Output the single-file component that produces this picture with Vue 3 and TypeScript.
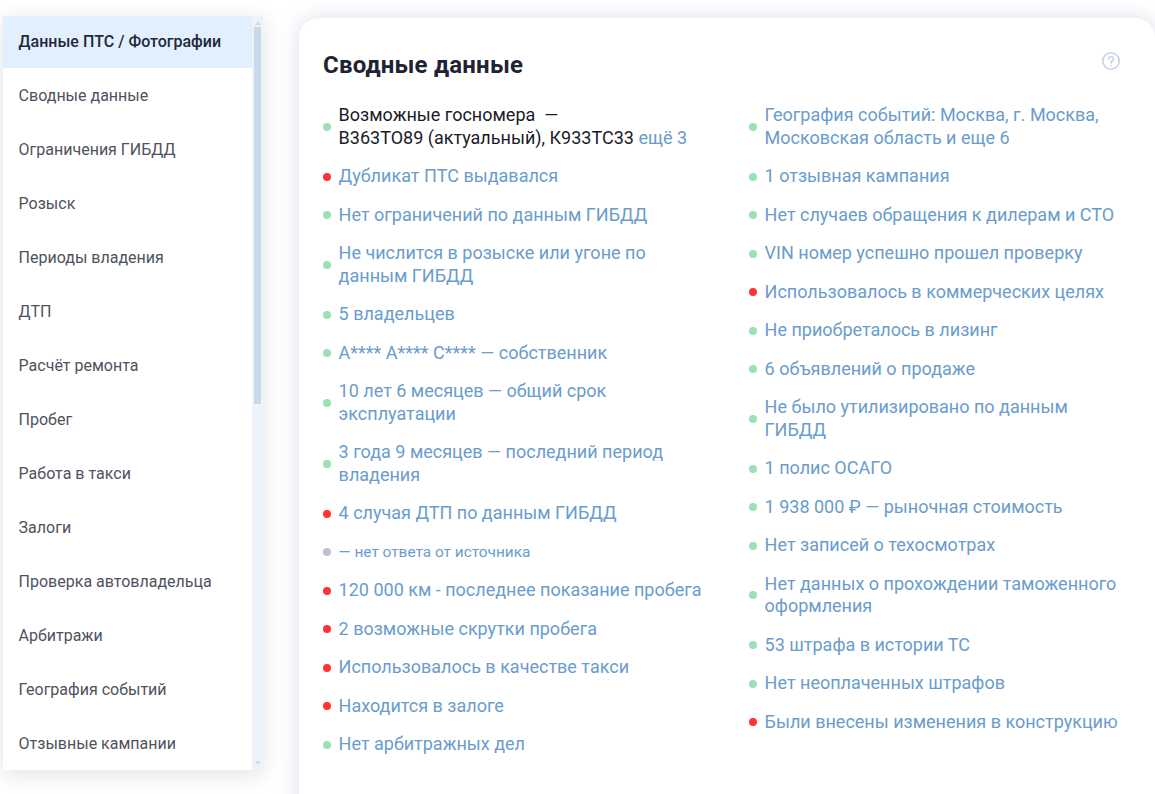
<script setup lang="ts">
type Dot = 'g' | 'r' | 'n'
interface Row { t: string; d: Dot; small?: boolean }
const menu: string[] = ['Данные ПТС / Фотографии','Сводные данные','Ограничения ГИБДД','Розыск','Периоды владения','ДТП','Расчёт ремонта','Пробег','Работа в такси','Залоги','Проверка автовладельца','Арбитражи','География событий','Отзывные кампании']
const left: Row[] = [
  { t: 'Дубликат ПТС выдавался', d: 'r' },
  { t: 'Нет ограничений по данным ГИБДД', d: 'g' },
  { t: 'Не числится в розыске или угоне по данным ГИБДД', d: 'g' },
  { t: '5 владельцев', d: 'g' },
  { t: 'А**** А**** С**** — собственник', d: 'g' },
  { t: '10 лет 6 месяцев — общий срок эксплуатации', d: 'g' },
  { t: '3 года 9 месяцев — последний период владения', d: 'g' },
  { t: '4 случая ДТП по данным ГИБДД', d: 'r' },
  { t: '— нет ответа от источника', d: 'n', small: true },
  { t: '120 000 км - последнее показание пробега', d: 'r' },
  { t: '2 возможные скрутки пробега', d: 'r' },
  { t: 'Использовалось в качестве такси', d: 'r' },
  { t: 'Находится в залоге', d: 'r' },
  { t: 'Нет арбитражных дел', d: 'g' },
]
const right: Row[] = [
  { t: 'География событий: Москва, г. Москва, Московская область и еще 6', d: 'g' },
  { t: '1 отзывная кампания', d: 'g' },
  { t: 'Нет случаев обращения к дилерам и СТО', d: 'g' },
  { t: 'VIN номер успешно прошел проверку', d: 'g' },
  { t: 'Использовалось в коммерческих целях', d: 'r' },
  { t: 'Не приобреталось в лизинг', d: 'g' },
  { t: '6 объявлений о продаже', d: 'g' },
  { t: 'Не было утилизировано по данным ГИБДД', d: 'g' },
  { t: '1 полис ОСАГО', d: 'g' },
  { t: '1 938 000 ₽ — рыночная стоимость', d: 'g' },
  { t: 'Нет записей о техосмотрах', d: 'g' },
  { t: 'Нет данных о прохождении таможенного оформления', d: 'g' },
  { t: '53 штрафа в истории ТС', d: 'g' },
  { t: 'Нет неоплаченных штрафов', d: 'g' },
  { t: 'Были внесены изменения в конструкцию', d: 'r' },
]
</script>

<template>
  <div class="page">
    <aside class="side">
      <ul class="menu">
        <li v-for="(m, i) in menu" :key="m" class="mi" :class="{ on: i === 0 }">{{ m }}</li>
      </ul>
      <div class="bar">
        <span class="up"></span>
        <div class="track"><div class="thumb"></div></div>
        <span class="down"></span>
      </div>
    </aside>
    <main class="card">
      <header class="head">
        <h2 class="title">Сводные данные</h2>
        <svg class="help" width="20" height="20" viewBox="0 0 20 20" fill="none" stroke="#c3d2e6" stroke-width="1.6">
          <circle cx="10" cy="10" r="8.2" />
          <path d="M7.6 8a2.4 2.4 0 1 1 3.7 2c-.9.6-1.3 1-1.3 2" stroke-linecap="round" />
          <circle cx="10" cy="14.4" r=".5" fill="#c3d2e6" stroke-width=".8" />
        </svg>
      </header>
      <div class="cols">
        <ul class="col">
          <li class="row">
            <i class="dot g"></i>
            <span class="txt dark">Возможные госномера&nbsp; —<br />В363ТО89 (актуальный), К933ТС33 <a class="more">ещё 3</a></span>
          </li>
          <li v-for="r in left" :key="r.t" class="row">
            <i class="dot" :class="r.d"></i>
            <span class="txt" :class="{ small: r.small }">{{ r.t }}</span>
          </li>
        </ul>
        <ul class="col">
          <li v-for="r in right" :key="r.t" class="row">
            <i class="dot" :class="r.d"></i>
            <span class="txt">{{ r.t }}</span>
          </li>
        </ul>
      </div>
    </main>
  </div>
</template>

<style>
html, body { margin: 0; background: #fff; overflow: hidden; }
</style>

<style scoped>
.page {
  display: flex;
  align-items: flex-start;
  width: 1155px;
  height: 794px;
  overflow: hidden;
  font-family: Roboto, "Noto Sans", sans-serif;
  background: #fff;
}
.side {
  display: flex;
  flex: none;
  width: 260px;
  height: 754px;
  margin: 16px 0 0 3px;
  background: #fff;
  box-shadow: 0 4px 20px rgba(40, 50, 80, 0.14);
  overflow: hidden;
}
.menu {
  flex: none;
  width: 249px;
  margin: -2px 0 0;
  padding: 0;
  list-style: none;
}
.mi {
  height: 54px;
  line-height: 56px;
  padding-left: 15.6px;
  font-size: 16px;
  color: #4f525e;
  white-space: nowrap;
}
.mi.on {
  background: #e1effe;
  color: #23283a;
  font-weight: 500;
}
.bar {
  flex: none;
  width: 11px;
  background: #eef2f9;
  display: flex;
  flex-direction: column;
  align-items: center;
}
.up, .down {
  flex: none;
  width: 0;
  height: 0;
  border-left: 3px solid transparent;
  border-right: 3px solid transparent;
}
.up { margin-top: 5px; border-bottom: 4px solid #d0dcec; }
.down { margin-bottom: 5px; border-top: 4px solid #d0dcec; }
.track { flex: 1; width: 7px; padding-top: 2px; margin-bottom: 5px; }
.thumb { height: 377px; background: #c9d8ea; }
.card {
  flex: none;
  width: 856px;
  height: 800px;
  box-sizing: border-box;
  margin: 18px 0 0 36px;
  padding: 32px 24px 0;
  border-radius: 20px 20px 0 0;
  background: #fff;
  box-shadow: 0 0 20px rgba(90, 100, 170, 0.22);
}
.head {
  display: flex;
  justify-content: space-between;
  align-items: flex-start;
  padding-right: 10px;
}
.title {
  margin: 0;
  font-size: 24px;
  line-height: 30px;
  font-weight: 700;
  letter-spacing: 0.2px;
  color: #1f2433;
}
.help { margin-top: 1px; }
.cols {
  display: flex;
  margin-top: 24.25px;
}
.col {
  flex: none;
  width: 426px;
  margin: 0;
  padding: 0;
  list-style: none;
}
.row {
  display: flex;
  align-items: center;
  margin-bottom: 16px;
}
.dot {
  flex: none;
  width: 8px;
  height: 8px;
  margin-right: 7.6px;
  border-radius: 50%;
}
.dot.g { background: #98e2b4; }
.dot.r { background: #ff3333; }
.dot.n { background: #c0c0d0; }
.txt {
  width: 365px;
  font-size: 18px;
  line-height: 22.5px;
  color: #6a9ccc;
}
.txt.small { font-size: 15.4px; }
.txt.dark { color: #1a1c28; }
.more { color: #6a9ccc; }
</style>
